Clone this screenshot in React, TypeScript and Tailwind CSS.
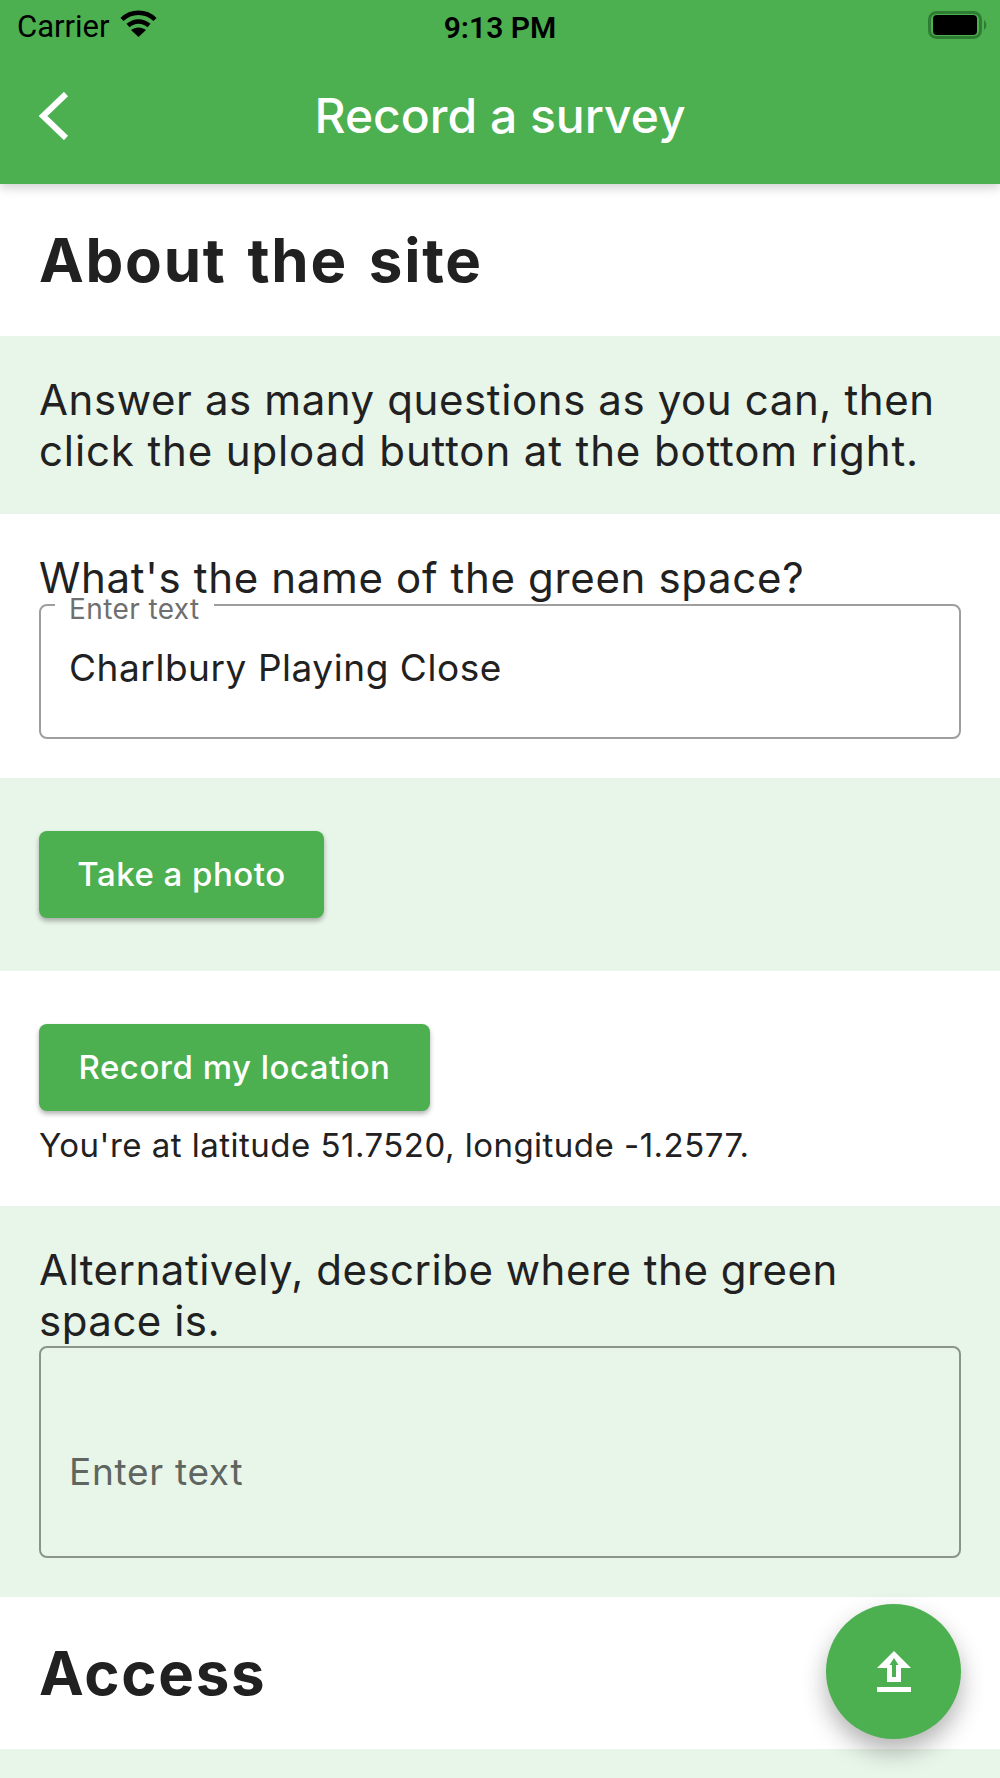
import React from "react";

function Heading({ children }: { children: React.ReactNode }) {
  return (
    <div className="h-[152px] bg-white px-[39px] flex items-center">
      <h2 className="text-[60px] leading-[72px] font-bold text-[#212121] tracking-[1.75px] [word-spacing:5px]">{children}</h2>
    </div>
  );
}

function RaisedButton({ label, className }: { label: string; className: string }) {
  return (
    <button className={`h-[87px] rounded-[8px] bg-[#4caf50] text-white text-[33px] font-medium tracking-[0.5px] shadow-[0_3px_5px_rgba(0,0,0,0.3)] ${className}`}>
      {label}
    </button>
  );
}

export default function App() {
  return (
    <div className="relative w-[1000px] h-[1778px] overflow-hidden bg-white font-['Inter',sans-serif] text-[#212121]">
      {/* App bar */}
      <header className="relative z-10 h-[184px] bg-[#4caf50] shadow-[0_4px_10px_rgba(0,0,0,0.18)]">
        <div className="relative h-[54px] pl-[17px] pr-[13px] flex items-center justify-between text-black">
          <div className="flex items-center gap-[10px]">
            <span className="text-[31px] font-['Roboto',sans-serif]">Carrier</span>
            <svg className="mb-[7px]" width="37" height="27" viewBox="0 0 37 27" fill="none" stroke="#000" strokeWidth="4.5">
              <path d="M2 9.5C11 0.5 26 0.5 35 9.5" />
              <path d="M8 15.5C14 10 23 10 29 15.5" />
              <path d="M18.5 27L11 20C15.5 16.5 21.5 16.5 26 20Z" fill="#000" stroke="none" />
            </svg>
          </div>
          <span className="absolute left-0 right-0 text-center text-[30px] font-semibold font-['Roboto',sans-serif]">9:13 PM</span>
          <svg className="mb-[4px]" width="59" height="28" viewBox="0 0 59 28">
            <rect x="1.5" y="1.5" width="51" height="25" rx="7" fill="none" stroke="#2e7d32" strokeWidth="3" />
            <rect x="5" y="4" width="44" height="20" rx="4" fill="#000" />
            <path d="M56 9C59 11 59 17 56 19Z" fill="#2e7d32" />
          </svg>
        </div>
        <div className="relative h-[130px] flex items-start justify-center pt-[34px]">
          <svg className="absolute left-[38px] top-[38px]" width="32" height="48" viewBox="0 0 32 48" fill="none" stroke="#fff" strokeWidth="6">
            <path d="M28 2L5 24L28 46" />
          </svg>
          <span className="text-[48px] leading-[56px] font-medium text-white">Record a survey</span>
        </div>
      </header>

      <Heading>About the site</Heading>

      <section className="h-[178px] bg-[#e8f5e9] px-[39px] pt-[38px]">
        <p className="text-[42px] leading-[51px] tracking-[0.6px]">
          Answer as many questions as you can, then
          <span className="block tracking-[0.87px]">click the upload button at the bottom right.</span>
        </p>
      </section>

      <section className="h-[264px] px-[39px] pt-[38px]">
        <p className="text-[42px] leading-[51px] tracking-[0.66px]">What's the name of the green space?</p>
        <div className="relative h-[135px] mt-[1px] rounded-[8px] border-2 border-[#9e9e9e] px-[28px] pt-[38px]">
          <span className="absolute left-[14px] -top-[13px] bg-white px-[14px] text-[28px] leading-[32px] text-[#6f6f6f] tracking-[0.4px]">
            Enter text
          </span>
          <span className="text-[37px] leading-[48px] tracking-[0.55px]">Charlbury Playing Close</span>
        </div>
      </section>

      <section className="h-[193px] bg-[#e8f5e9] px-[39px] pt-[53px]">
        <RaisedButton label="Take a photo" className="w-[285px]" />
      </section>

      <section className="h-[235px] px-[39px] pt-[53px]">
        <RaisedButton label="Record my location" className="w-[391px]" />
        <p className="mt-[14px] text-[33px] leading-[40px] tracking-[0.48px]">You're at latitude 51.7520, longitude -1.2577.</p>
      </section>

      <section className="h-[391px] bg-[#e8f5e9] px-[39px] pt-[38px]">
        <p className="text-[42px] leading-[51px] tracking-[0.5px]">Alternatively, describe where the green space is.</p>
        <div className="h-[212px] rounded-[8px] border-2 border-[#8a948b] px-[28px] flex items-end pb-[60px]">
          <span className="text-[37px] leading-[48px] tracking-[0.7px] text-[#5e665f]">Enter text</span>
        </div>
      </section>

      <Heading>Access</Heading>

      <div className="h-[30px] bg-[#e8f5e9]" />

      {/* Upload FAB */}
      <button className="absolute right-[39px] top-[1604px] w-[135px] h-[135px] rounded-full bg-[#4caf50] flex items-center justify-center shadow-[0_12px_24px_rgba(0,0,0,0.3)]">
        <svg width="36" height="42" viewBox="0 0 36 42" fill="#fff">
          <path fillRule="evenodd" d="M18 0L35 17H25V31H11V17H1Z M18 7L13.5 14H16V26H20V14H22.5Z" />
          <rect x="1" y="36" width="34" height="5" />
        </svg>
      </button>
    </div>
  );
}
